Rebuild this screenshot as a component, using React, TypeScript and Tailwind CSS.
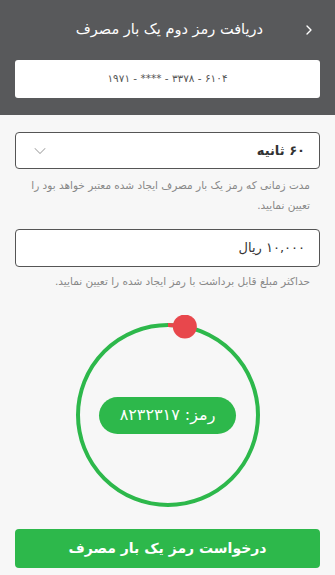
import { ChevronDown, ChevronRight } from "lucide-react"

const Countdown = ({ code, progress }: { code: string; progress: number }) => {
  const r = 90
  const c = 2 * Math.PI * r
  const angle = progress * 2 * Math.PI - Math.PI / 2
  const dotX = 100 + r * Math.cos(angle)
  const dotY = 100 + r * Math.sin(angle)

  return (
    <div className="relative mx-auto h-[200px] w-[200px]">
      <svg width="200" height="200" viewBox="0 0 200 200" className="absolute inset-0">
        <circle cx="100" cy="100" r={r} fill="none" stroke="#2db84b" strokeWidth="4" />
        <circle
          cx="100"
          cy="100"
          r={r}
          fill="none"
          stroke="#e8474c"
          strokeWidth="4"
          strokeDasharray={`${c * progress} ${c}`}
          transform="rotate(-90 100 100)"
        />
        <circle cx={dotX} cy={dotY} r="12" fill="#e8474c" />
      </svg>
      <div className="absolute inset-0 flex items-center justify-center">
        <div className="flex h-[37px] w-[137px] items-center justify-center rounded-full bg-[#2db84b] text-[16px] text-white">
          رمز: {code}
        </div>
      </div>
    </div>
  )
}

export default function App() {
  return (
    <div
      dir="rtl"
      className="min-h-[575px] w-full bg-[#f7f7f7] font-['DejaVu_Sans',sans-serif]"
    >
      <header className="bg-[#58595b] px-[15px] pb-[17px]">
        <div className="flex h-[60px] items-center gap-[38px] pr-[3px]">
          <ChevronRight className="h-[16px] w-[16px] text-white" strokeWidth={2} />
          <h1 className="text-[14.5px] text-white">دریافت رمز دوم یک بار مصرف</h1>
        </div>
        <div className="flex h-[38px] items-center justify-center rounded-[3px] bg-white">
          <span dir="ltr" className="text-[10.5px] tracking-wide text-[#555]">
            ۱۹۷۱ - **** - ۳۳۷۸ - ۶۱۰۴
          </span>
        </div>
      </header>

      <main className="px-[15px] pt-[17px]">
        <button className="flex h-[37px] w-full items-center justify-between rounded-[4px] border border-[#555] bg-white px-[14px]">
          <span className="text-[13px] font-bold text-[#333]">۶۰ ثانیه</span>
          <ChevronDown className="h-[20px] w-[20px] text-[#aaa]" strokeWidth={1.25} />
        </button>
        <p className="mt-[6px] pl-[4px] pr-[10px] text-[10.5px] leading-[20px] text-[#888]">
          مدت زمانی که رمز یک بار مصرف ایجاد شده معتبر خواهد بود را تعیین نمایید.
        </p>

        <div className="mt-[14px] flex h-[38px] w-full items-center rounded-[4px] border border-[#555] bg-white px-[14px]">
          <span className="text-[13px] text-[#333]">۱۰,۰۰۰ ریال</span>
        </div>
        <p className="mt-[4px] px-[10px] text-[10.5px] leading-[20px] text-[#888]">
          حداکثر مبلغ قابل برداشت با رمز ایجاد شده را تعیین نمایید.
        </p>

        <div className="mt-[24px]">
          <Countdown code="۸۲۳۲۳۱۷" progress={0.03} />
        </div>

        <button className="mt-[14px] flex h-[39px] w-full items-center justify-center rounded-[4px] bg-[#2db84b] text-[14px] font-bold text-white">
          درخواست رمز یک بار مصرف
        </button>
      </main>
    </div>
  )
}
